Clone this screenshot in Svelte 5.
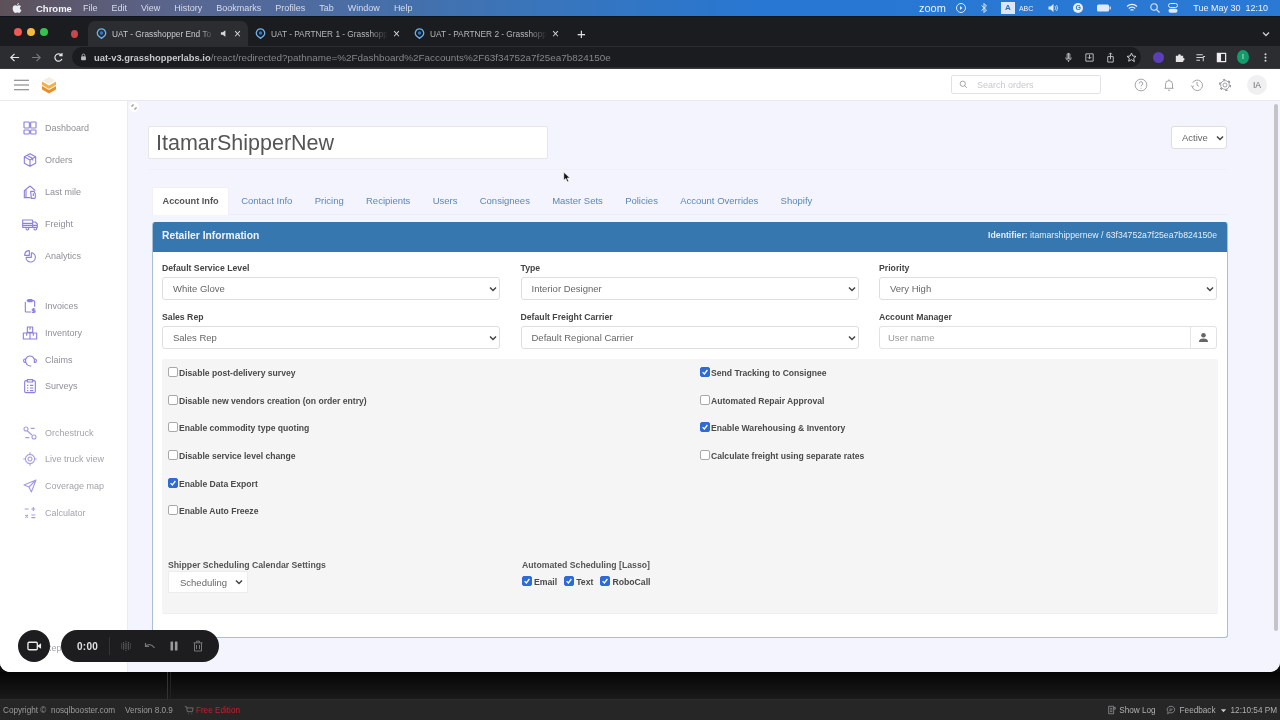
<script>
  const menus = ['File','Edit','View','History','Bookmarks','Profiles','Tab','Window','Help'];
  const tabs = [
    { t: 'UAT - Grasshopper End To', active: true },
    { t: 'UAT - PARTNER 1 - Grasshopp' },
    { t: 'UAT - PARTNER 2 - Grasshopp' }
  ];
  const navIcons = {
    dash: 'M3 3h7a1 1 0 0 1 1 1v7a1 1 0 0 1-1 1H4a1 1 0 0 1-1-1zM14 3h6a1 1 0 0 1 1 1v7a1 1 0 0 1-1 1h-6a1 1 0 0 1-1-1V4a1 1 0 0 1 1-1zM4 15h6a1 1 0 0 1 1 1v4a1 1 0 0 1-1 1H4a1 1 0 0 1-1-1v-4a1 1 0 0 1 1-1zM14 15h6a1 1 0 0 1 1 1v4a1 1 0 0 1-1 1h-6a1 1 0 0 1-1-1v-4a1 1 0 0 1 1-1z',
    box: 'M12 2.5l8.5 4.8v9.4L12 21.5l-8.5-4.8V7.3zM3.5 7.3L12 12l8.5-4.7M12 12v9.5M7.5 5l8.5 4.8v3',
    home: 'M12 3L3.5 10v10.5h9M12 3l8 7M6 8.5V21M13 11h5l2 4v5a1.5 1.5 0 0 1-1.5 1.5H14zM17 14v4',
    truck: 'M1 6h14a1 1 0 0 1 1 1v10H1zM16 9h4l3 3v5h-7zM1 11h15M1 14h22M6 19a2 2 0 1 0 0-.1M18 19a2 2 0 1 0 0-.1',
    pie: 'M10 4a7 7 0 0 0-6 7h7V4zM14 7a7 7 0 1 1-8 7M14 7v7H6',
    inv: 'M7 4h10a2 2 0 0 1 2 2v7M5 6v14a1 1 0 0 0 1 1h8M9 2.5h6v3H9zM17.5 15v7M20 16.5h-3.5a1.2 1.2 0 0 0 0 2.5h2a1.2 1.2 0 0 1 0 2.5H15',
    stock: 'M8 3h8v8H8zM2 12h10v9H2zM12 12h10v9H12zM12 3v4M7 12v4M17 12v4',
    claim: 'M6 10a6.5 6.5 0 0 1 12 0M4.5 10.5a2 2 0 0 0-2 2v1a2 2 0 0 0 2 2h1v-5zM19.5 10.5a2 2 0 0 1 2 2v1a2 2 0 0 1-2 2h-1v-5zM6 16a7 7 0 0 0 6 5h2',
    survey: 'M8 4H6a2 2 0 0 0-2 2v14a2 2 0 0 0 2 2h12a2 2 0 0 0 2-2V6a2 2 0 0 0-2-2h-2M8 2.5h8v3.500H8zM7.500 11h2M12 11h5M7.500 15h2M12 15h5M7.500 19h2M12 19h5',
    orch: 'M3 6a3 3 0 1 0 6 0a3 3 0 1 0-6 0M15 18a3 3 0 1 0 6 0a3 3 0 1 0-6 0M8 9l7 6M13 5h6M5 19h6',
    live: 'M12 5a7 7 0 1 0 .01 0zM12 9a3 3 0 1 0 .01 0zM12 2v3M12 19v3M2 12h3M19 12h3',
    plane: 'M21 3L3 10.500l7.500 3L14 21zM10.500 13.500L21 3',
    calc: 'M4 6h6M14 6h6M17 3v6M5 15l4 4M9 15l-4 4M14 15h6M14 19h6',
    rep: 'M4 20V10M10 20V4M16 20v-7'
  };
  const groups = [
    { cls: 'g1', items: [['Dashboard','dash'],['Orders','box'],['Last mile','home'],['Freight','truck'],['Analytics','pie']] },
    { cls: 'g2', items: [['Invoices','inv'],['Inventory','stock'],['Claims','claim'],['Surveys','survey']] },
    { cls: 'g3', items: [['Orchestruck','orch'],['Live truck view','live'],['Coverage map','plane'],['Calculator','calc']] }
  ];
  const pageTabs = ['Account Info','Contact Info','Pricing','Recipients','Users','Consignees','Master Sets','Policies','Account Overrides','Shopify'];
  const leftChecks = [
    ['Disable post-delivery survey', false],
    ['Disable new vendors creation (on order entry)', false],
    ['Enable commodity type quoting', false],
    ['Disable service level change', false],
    ['Enable Data Export', true],
    ['Enable Auto Freeze', false]
  ];
  const rightChecks = [
    ['Send Tracking to Consignee', true],
    ['Automated Repair Approval', false],
    ['Enable Warehousing & Inventory', true],
    ['Calculate freight using separate rates', false]
  ];
</script>

{#snippet chevron()}
  <svg class="chev" viewBox="0 0 10 10" aria-hidden="true"><path d="M2 3.500L5 6.500L8 3.500" fill="none" stroke="#444" stroke-width="1.500"/></svg>
{/snippet}

{#snippet selectBox(value, cls)}
  <div class="select {cls}">
    <span>{value}</span>
    {@render chevron()}
  </div>
{/snippet}

{#snippet check(on)}
  <span class="cb" class:on>
    {#if on}
      <svg viewBox="0 0 10 10" aria-hidden="true"><path d="M2 5.200L4.200 7.500L8 2.500" fill="none" stroke="#fff" stroke-width="1.600"/></svg>
    {/if}
  </span>
{/snippet}

{#snippet favicon()}
  <svg class="fav" viewBox="0 0 12 12" aria-hidden="true"><path d="M6 1a4.500 4.500 0 0 1 3.200 7.700L6 11.300L2.800 8.700A4.500 4.500 0 0 1 6 1z" fill="none" stroke="#6fb3e8" stroke-width="1.400"/><circle cx="6" cy="5.500" r="1.900" fill="#2f76c9"/></svg>
{/snippet}

<div class="screen">
  <header class="menubar">
    <svg class="apple" viewBox="0 0 12 14" aria-hidden="true"><path d="M8.300 1c.1 1-.9 2.400-2.200 2.300C6 2.200 7.100 1.100 8.300 1zM6.100 4.200c.6 0 1.300-.6 2.400-.6c.9 0 1.800.5 2.300 1.200c-2 1.200-1.600 3.900.5 4.700c-.5 1.400-1.700 3.500-2.900 3.500c-.8 0-1.100-.5-2.100-.5s-1.400.5-2.100.5C2.500 12.800.8 10 .8 7.500c0-2.400 1.500-3.800 3-3.800c.9 0 1.700.5 2.300.5z" fill="#e9edf4"/></svg>
    <strong class="app-name">Chrome</strong>
    <nav class="menus">
      {#each menus as m}<span>{m}</span>{/each}
    </nav>
    <div class="status-items">
      <span class="zoom">zoom</span>
      <svg class="tray s12 play" viewBox="0 0 12 12" aria-hidden="true"><circle cx="6" cy="6" r="4.500" fill="none" stroke="#dfe9f7"/><path d="M5 4l2.500 2L5 8z" fill="#dfe9f7"/></svg>
      <svg class="tray s12" viewBox="0 0 12 12" aria-hidden="true"><path d="M3.500 3.500L8.500 8L6 10.500V1.500L8.500 4L3.500 8.500" fill="none" stroke="#dfe9f7"/></svg>
      <span class="kbd">A</span>
      <span class="abc">ABC</span>
      <svg class="tray s12 sp3" viewBox="0 0 12 12" aria-hidden="true"><path d="M1.500 4.500h2L6.500 2v8l-3-2.500h-2z" fill="#dfe9f7"/><path d="M8 4a3 3 0 0 1 0 4M9.500 3a5 5 0 0 1 0 6" fill="none" stroke="#dfe9f7" stroke-width=".8"/></svg>
      <span class="g-circle sp3">G</span>
      <svg class="tray s16 sp2" viewBox="0 0 16 10" aria-hidden="true"><rect x="1" y="1.500" width="12" height="7" rx="1.500" fill="#dfe9f7"/><rect x="13.500" y="3.500" width="1.300" height="3" fill="#dfe9f7"/></svg>
      <svg class="tray s12 sp3" viewBox="0 0 12 12" aria-hidden="true"><path d="M1 4.500a7 7 0 0 1 10 0M2.800 6.500a4.500 4.500 0 0 1 6.400 0M4.500 8.300a2.200 2.200 0 0 1 3 0" fill="none" stroke="#e9f0fa" stroke-width="1.100"/></svg>
      <svg class="tray s12" viewBox="0 0 12 12" aria-hidden="true"><circle cx="5" cy="5" r="3.200" fill="none" stroke="#dfe9f7" stroke-width="1.100"/><path d="M7.500 7.500L10.500 10.500" stroke="#dfe9f7" stroke-width="1.100"/></svg>
      <svg class="tray s12 ctl" viewBox="0 0 12 12" aria-hidden="true"><rect x="1.500" y="1.500" width="9" height="4" rx="2" fill="none" stroke="#dfe9f7"/><rect x="1.500" y="6.800" width="9" height="4" rx="2" fill="#dfe9f7"/></svg>
      <span class="clock">Tue May 30&nbsp;&nbsp;12:10</span>
    </div>
  </header>

  <div class="tabstrip">
    <div class="lights"><i class="red"></i><i class="yellow"></i><i class="green"></i></div>
    <i class="rec-dot"></i>
    {#each tabs as tab}
      <div class="tab" class:active={tab.active}>
        {@render favicon()}
        <span class="tab-title">{tab.t}</span>
        {#if tab.active}
          <svg class="tab-sound" viewBox="0 0 10 10" aria-hidden="true"><path d="M1 3.500h2L6 1.500v7L3 6.500H1z" fill="#d8d8da"/></svg>
        {/if}
        <span class="tab-x">×</span>
      </div>
    {/each}
    <span class="tab-plus">+</span>
    <svg class="tab-more" viewBox="0 0 10 10" aria-hidden="true"><path d="M2 3.500L5 6.500L8 3.500" fill="none" stroke="#c8c8ca" stroke-width="1.400"/></svg>
  </div>

  <div class="toolbar">
    <svg class="nav-ico" viewBox="0 0 12 12" aria-hidden="true"><path d="M11 6H2M6 2L2 6l4 4" fill="none" stroke="#e6e6e8" stroke-width="1.300"/></svg>
    <svg class="nav-ico" viewBox="0 0 12 12" aria-hidden="true"><path d="M1 6h9M6 2l4 4l-4 4" fill="none" stroke="#76777b" stroke-width="1.300"/></svg>
    <svg class="nav-ico" viewBox="0 0 12 12" aria-hidden="true"><path d="M9.800 7.500A4 4 0 1 1 9 3.300M9.800 1v3H6.800" fill="none" stroke="#e6e6e8" stroke-width="1.300"/></svg>
    <div class="omnibox">
      <svg class="lock" viewBox="0 0 8 10" aria-hidden="true"><rect x="1" y="4" width="6" height="5" rx="1" fill="#bcbcc0"/><path d="M2.300 4V3a1.700 1.700 0 0 1 3.400 0v1" fill="none" stroke="#bcbcc0"/></svg>
      <span class="url"><b>uat-v3.grasshopperlabs.io</b>/react/redirected?pathname=%2Fdashboard%2Faccounts%2F63f34752a7f25ea7b824150e</span>
      <div class="omni-icons">
        <svg viewBox="0 0 12 12" aria-hidden="true"><path d="M6 1v6M4.500 2h3v5h-3zM3 6a3 3 0 0 0 6 0M6 9v2" fill="none" stroke="#b9babd"/></svg>
        <svg viewBox="0 0 12 12" aria-hidden="true"><path d="M2 2h8v8H2zM6 3v4M4 5.500L6 7.500l2-2" fill="none" stroke="#c2c3c6"/></svg>
        <svg viewBox="0 0 12 12" aria-hidden="true"><path d="M3 5h6v6H3zM6 8V1M4.300 2.700L6 1l1.700 1.700" fill="none" stroke="#c2c3c6"/></svg>
        <svg viewBox="0 0 12 12" aria-hidden="true"><path d="M6 1.200l1.500 3.200l3.400.4l-2.500 2.300l.7 3.400L6 8.400l-3.100 1.700l.7-3.400L1.100 4.800l3.400-.4z" fill="none" stroke="#d4d5d8"/></svg>
      </div>
    </div>
    <div class="ext-icons">
      <i class="ext-purple"></i>
      <svg viewBox="0 0 12 12" aria-hidden="true"><path d="M2 4h2.500a1.500 1.500 0 1 1 3 0H10v2.500a1.500 1.500 0 1 1 0 3V11H2z" fill="#e4e4e6"/></svg>
      <svg viewBox="0 0 12 12" aria-hidden="true"><path d="M1.500 3h7M1.500 6h7M1.500 9h4M9 5v5M9 5h2" fill="none" stroke="#d6d6d8" stroke-width="1.100"/></svg>
      <svg viewBox="0 0 12 12" aria-hidden="true"><rect x="1.500" y="1.500" width="9" height="9" fill="none" stroke="#f0f0f2" stroke-width="1.300"/><rect x="1.500" y="1.500" width="4" height="9" fill="#f0f0f2"/></svg>
      <span class="profile">I</span>
      <svg viewBox="0 0 12 12" aria-hidden="true"><circle cx="6" cy="2.500" r="1.100" fill="#d8d8da"/><circle cx="6" cy="6" r="1.100" fill="#d8d8da"/><circle cx="6" cy="9.500" r="1.100" fill="#d8d8da"/></svg>
    </div>
  </div>

  <div class="window">
    <div class="topbar">
      <svg class="burger" viewBox="0 0 16 12" aria-hidden="true"><path d="M0 1h16M0 6h16M0 11h16" stroke="#77777c" stroke-width="1.100"/></svg>
      <svg class="logo" viewBox="0 0 16 18" aria-hidden="true"><path d="M8 1l6 3.500L8 8L2 4.500z" fill="#f3eee2"/><path d="M1 5.500L8 9.500l7-4v3.500L8 13L1 9z" fill="#f2b04a"/><path d="M1 10L8 14l7-4v3.500L8 17.500L1 13.500z" fill="#e8902c"/></svg>
      <div class="search">
        <svg viewBox="0 0 12 12" aria-hidden="true"><circle cx="5" cy="5" r="3.500" fill="none" stroke="#8b8b90"/><path d="M7.600 7.600L10.500 10.500" stroke="#8b8b90"/></svg>
        <span>Search orders</span>
      </div>
      <div class="top-icons">
        <svg viewBox="0 0 16 16" aria-hidden="true"><circle cx="8" cy="8" r="6.700" fill="none" stroke="#8e8e93" stroke-width=".9"/><path d="M6 6.300a2 2 0 1 1 3 1.700c-.7.400-1 .8-1 1.600M8 11.300v.8" fill="none" stroke="#8e8e93"/></svg>
        <svg viewBox="0 0 16 16" aria-hidden="true"><path d="M4 11.500V7a4 4 0 0 1 8 0v4.500M2.800 11.800h10.400M6.800 14h2.400M8 1.500V3" fill="none" stroke="#8e8e93" stroke-width=".9"/></svg>
        <svg viewBox="0 0 16 16" aria-hidden="true"><path d="M3 5.500A6 6 0 1 1 2.500 10M1.500 8.500l1.200 1.700l1.800-1.300M8 4.500V8l2.300 1.500" fill="none" stroke="#8e8e93" stroke-width=".9"/></svg>
        <svg viewBox="0 0 16 16" aria-hidden="true"><circle cx="8" cy="8" r="2.300" fill="none" stroke="#8e8e93" stroke-width=".9"/><circle cx="8" cy="8" r="5" fill="none" stroke="#8e8e93" stroke-width=".9"/><circle cx="8" cy="8" r="6.200" fill="none" stroke="#8e8e93" stroke-width="1.500" stroke-dasharray="2.600 3.900"/></svg>
      </div>
      <span class="avatar">IA</span>
    </div>

    <div class="body">
      <aside class="sidebar">
        {#each groups as g}
          <ul class={g.cls}>
            {#each g.items as [label, icon]}
              <li>
                <svg viewBox="0 0 24 24" aria-hidden="true"><path d={navIcons[icon]} fill="none" stroke="currentColor" stroke-width="1.700" stroke-linejoin="round"/></svg>
                <span>{label}</span>
              </li>
            {/each}
          </ul>
        {/each}
        <ul class="g3 g-last"><li><svg viewBox="0 0 24 24" aria-hidden="true"><path d={navIcons.rep} fill="none" stroke="currentColor" stroke-width="1.500"/></svg><span>Reports</span></li></ul>
      </aside>

      <main class="content">
        <div class="title-row">
          <input class="title" value="ItamarShipperNew" aria-label="Account name" />
          {@render selectBox('Active', 'status')}
        </div>

        <div class="page-tabs">
          {#each pageTabs as t, i}
            <span class="page-tab" class:current={i === 0}>{t}</span>
          {/each}
        </div>

        <section class="panel">
          <div class="panel-head">
            <strong>Retailer Information</strong>
            <span class="ident"><b>Identifier:</b> itamarshippernew / 63f34752a7f25ea7b824150e</span>
          </div>
          <div class="panel-body">
            <div class="fields">
              <div class="field"><label>Default Service Level</label>{@render selectBox('White Glove', '')}</div>
              <div class="field"><label>Type</label>{@render selectBox('Interior Designer', '')}</div>
              <div class="field"><label>Priority</label>{@render selectBox('Very High', '')}</div>
              <div class="field"><label>Sales Rep</label>{@render selectBox('Sales Rep', '')}</div>
              <div class="field"><label>Default Freight Carrier</label>{@render selectBox('Default Regional Carrier', '')}</div>
              <div class="field">
                <label>Account Manager</label>
                <div class="user-input">
                  <span>User name</span>
                  <div class="addon"><svg viewBox="0 0 12 12" aria-hidden="true"><circle cx="6" cy="3.500" r="2.500" fill="#666"/><path d="M1 11c0-3 2-4 5-4s5 1 5 4z" fill="#666"/></svg></div>
                </div>
              </div>
            </div>

            <div class="well">
              <div class="check-cols">
                <div class="check-col left">
                  {#each leftChecks as [text, on]}
                    <div class="check-row">{@render check(on)}<span>{text}</span></div>
                  {/each}
                </div>
                <div class="check-col">
                  {#each rightChecks as [text, on]}
                    <div class="check-row">{@render check(on)}<span>{text}</span></div>
                  {/each}
                </div>
              </div>
              <div class="sched">
                <div class="sched-a">
                  <div class="well-label">Shipper Scheduling Calendar Settings</div>
                  {@render selectBox('Scheduling', 'small')}
                </div>
                <div class="sched-b">
                  <div class="well-label">Automated Scheduling [Lasso]</div>
                  <div class="inline-checks">
                    <span>{@render check(true)}<em>Email</em></span>
                    <span>{@render check(true)}<em>Text</em></span>
                    <span>{@render check(true)}<em>RoboCall</em></span>
                  </div>
                </div>
              </div>
            </div>
          </div>
        </section>
      </main>
      <div class="scrollbar"><i></i></div>
    </div>
  </div>

  <div class="desk"><div class="pane p1"></div><div class="pane p2"></div></div>

  <footer class="statusbar">
    <span>Copyright ©&nbsp; nosqlbooster.com</span>
    <span class="ver">Version 8.0.9</span>
    <svg class="cart" viewBox="0 0 12 12" aria-hidden="true"><path d="M1 2h2l1 6h6l1-4.500H3.500M5 10.500h.8M9 10.500h.8" fill="none" stroke="#77787a"/></svg>
    <span class="free">Free Edition</span>
    <span class="right-status">
      <svg viewBox="0 0 12 12" aria-hidden="true"><path d="M2 1.500h6v9H2zM3.500 4h3M3.500 6h3M3.500 8h3M8 3h2v2H8" fill="none" stroke="#a8a8aa" stroke-width=".8"/></svg>
      <span>Show Log</span>
      <svg class="fb" viewBox="0 0 12 12" aria-hidden="true"><path d="M6 1.500a4.500 4 0 1 1-2 7.600L2 10.500l.4-2.400A4.500 4 0 0 1 6 1.500zM4 5h4M4 6.800h2.500" fill="none" stroke="#a8a8aa" stroke-width=".8"/></svg>
      <span>Feedback</span>
      <svg class="caret" viewBox="0 0 8 8" aria-hidden="true"><path d="M1 2.500h6L4 6z" fill="#c8c8ca"/></svg>
      <span>12:10:54 PM</span>
    </span>
  </footer>

  <svg class="cursor" viewBox="0 0 10 14" aria-hidden="true"><path d="M1 1v10l2.500-2.200L5.300 13l1.700-.8L5.200 8.200H8.500z" fill="#111" stroke="#fff" stroke-width=".7"/></svg>
  <svg class="expand" viewBox="0 0 10 10" aria-hidden="true"><path d="M3 3h2M3 3v2M7 7H5M7 7V5" fill="none" stroke="#777" stroke-width=".8"/></svg>

  <div class="rec-btn">
    <svg viewBox="0 0 16 12" aria-hidden="true"><rect x="1" y="2" width="10" height="8" rx="1.300" fill="none" stroke="#eee" stroke-width="1.400"/><path d="M11.500 5.500L15 3v6l-3.500-2.500z" fill="#eee"/></svg>
  </div>
  <div class="rec-pill">
    <span class="time">0:00</span>
    <i class="sep"></i>
    <svg viewBox="0 0 12 12" aria-hidden="true"><path d="M6 1v10M3.500 2v8M8.500 2v8M1 4h10M1 6h10M1 8h10" stroke="#6f6f72" stroke-width=".8" stroke-dasharray="1 .8"/></svg>
    <svg viewBox="0 0 12 12" aria-hidden="true"><path d="M1.500 3v3.500H5M1.800 6.200C4 4 8 4 10.500 8" fill="none" stroke="#77777a" stroke-width="1.200"/></svg>
    <svg viewBox="0 0 12 12" aria-hidden="true"><rect x="2.500" y="1.500" width="2.600" height="9" rx=".6" fill="#9a9a9d"/><rect x="6.900" y="1.500" width="2.600" height="9" rx=".6" fill="#9a9a9d"/></svg>
    <svg viewBox="0 0 12 12" aria-hidden="true"><path d="M1.500 2.800h9M4.500 2.500V1.200h3v1.300M2.500 3v8h7V3M4.500 5v4M7.500 5v4" fill="none" stroke="#77777a"/></svg>
  </div>
</div>

<style>
  :global(body) { margin: 0; background: #111; }
  .screen {
    position: relative;
    width: 1280px;
    height: 720px;
    overflow: hidden;
    display: flex;
    flex-direction: column;
    background: #0d0d0e;
    font-family: "Liberation Sans", Arial, sans-serif;
    filter: blur(0.45px);
  }
  .menubar {
    height: 16px;
    flex: none;
    display: flex;
    align-items: center;
    padding-left: 12px;
    color: #e4e9f2;
    font-size: 9px;
    background: linear-gradient(90deg, #5d5058 0%, #5a6690 14%, #3b74b8 40%, #2777d3 60%, #2a79d4 100%);
    border-bottom: 1px solid #10141c;
  }
  .apple { width: 10px; height: 12px; margin-right: 14px; }
  .app-name { font-size: 9.500px; color: #f4f6fa; }
  .menus { display: flex; gap: 14px; margin-left: 11px; color: #d7dce8; }
  .status-items { margin-left: auto; display: flex; align-items: center; gap: 11px; padding-right: 12px; color: #eef3fb; }
  .zoom { font-size: 11px; }
  .tray { display: block; height: 12px; }
  .s12 { width: 12px; }
  .s16 { width: 16px; }
  .play { margin-left: -2px; }
  .sp3 { margin-left: 3px; }
  .sp2 { margin-left: 2px; }
  .ctl { margin-left: -5px; }
  .kbd { width: 14px; height: 12px; background: #dce6f4; color: #2f6fbf; font-size: 8px; font-weight: 700; text-align: center; line-height: 12px; }
  .abc { font-size: 7px; margin-left: -7px; }
  .g-circle { width: 10px; height: 10px; border-radius: 50%; background: #e6eef9; color: #2a79d4; font-size: 7px; font-weight: 700; text-align: center; line-height: 10px; }
  .clock { font-size: 9px; margin-left: 3px; }

  .tabstrip {
    height: 29px;
    flex: none;
    display: flex;
    align-items: flex-end;
    background: #1b1c1f;
    position: relative;
    padding-left: 88px;
  }
  .lights { position: absolute; left: 14px; top: 11px; display: flex; gap: 5px; }
  .lights i { width: 8px; height: 8px; border-radius: 50%; }
  .red { background: #ee5a55; }
  .yellow { background: #f4b93f; }
  .green { background: #35c24d; }
  .rec-dot { position: absolute; left: 71px; top: 13px; width: 7px; height: 8px; border-radius: 50%; background: #c8474c; }
  .tab {
    width: 148px;
    height: 25px;
    margin-right: 11px;
    box-sizing: border-box;
    display: flex;
    align-items: center;
    padding-left: 1px;
    padding-right: 2px;
    font-size: 8.300px;
    color: #b5b6ba;
    border-radius: 7px 7px 0 0;
    gap: 5px;
  }
  .tab.active { width: 160px; margin-right: 6px; padding-left: 8px; padding-right: 7px; background: #2c2d31; color: #c9cacd; }
  .fav { width: 11px; height: 11px; flex: none; }
  .tab-title { flex: 1; white-space: nowrap; -webkit-mask-image: linear-gradient(90deg, #000 85%, transparent); mask-image: linear-gradient(90deg, #000 85%, transparent); }
  .tab-sound { width: 9px; height: 9px; }
  .tab-x { color: #d8d8da; font-size: 12px; line-height: 1; }
  .tab-plus { align-self: center; color: #e0e0e2; font-size: 15px; margin-left: 5px; margin-top: 4px; line-height: 1; }
  .tab-more { position: absolute; right: 9px; top: 12px; width: 10px; height: 10px; }

  .toolbar {
    height: 23px;
    flex: none;
    display: flex;
    align-items: center;
    background: #2c2d31;
    padding-left: 9px;
    gap: 11px;
    border-bottom: 1px solid #3a3b3f;
    box-sizing: border-box;
  }
  .nav-ico { width: 11px; height: 11px; flex: none; }
  .omnibox {
    width: 1069px;
    margin-left: -3px;
    height: 20px;
    border-radius: 10px;
    background: #1b1c1f;
    display: flex;
    align-items: center;
    padding: 0 4px 0 8px;
    box-sizing: border-box;
    flex: none;
  }
  .lock { width: 7px; height: 8px; margin-right: 7px; flex: none; }
  .url { font-size: 9.900px; color: #85868a; white-space: nowrap; }
  .url b { font-size: 9.400px; color: #c8c9cc; font-weight: 700; }
  .omni-icons { margin-left: auto; display: flex; gap: 10px; }
  .omni-icons svg { width: 11px; height: 11px; }
  .ext-icons { display: flex; align-items: center; gap: 10px; margin-left: 1px; }
  .ext-icons svg { width: 11px; height: 11px; }
  .ext-purple { width: 11px; height: 11px; border-radius: 50%; background: #5b3fb8; }
  .profile { width: 12px; height: 14px; border-radius: 50%; background: #129c6c; color: #d5f3e6; font-size: 7px; text-align: center; line-height: 14px; margin-right: 1px; }

  .window {
    flex: none;
    height: 603px;
    background: #fff;
    border-radius: 0 0 10px 10px;
    overflow: hidden;
    display: flex;
    flex-direction: column;
  }
  .topbar {
    height: 32px;
    flex: none;
    box-sizing: border-box;
    display: flex;
    align-items: center;
    padding: 0 13px 0 14px;
    border-bottom: 1px solid #e8e8ee;
  }
  .burger { width: 15px; height: 12px; }
  .logo { width: 16px; height: 18px; margin-left: 12px; }
  .search {
    margin-left: auto;
    width: 150px;
    height: 19px;
    box-sizing: border-box;
    border: 1px solid #e2e2e6;
    border-radius: 2px;
    display: flex;
    align-items: center;
    padding-left: 7px;
    gap: 9px;
    font-size: 9px;
    color: #c9c9cd;
  }
  .search svg { width: 9px; height: 9px; }
  .top-icons { display: flex; gap: 14px; margin-left: 33px; }
  .top-icons svg { width: 14px; height: 14px; }
  .avatar {
    margin-left: 15px;
    width: 20px;
    height: 20px;
    border-radius: 50%;
    background: #f0f0f2;
    color: #6c6c70;
    font-size: 8.500px;
    text-align: center;
    line-height: 20px;
  }

  .body { flex: 1; min-height: 0; display: flex; position: relative; background: #f3f4fd; }
  .sidebar {
    width: 128px;
    flex: none;
    box-sizing: border-box;
    background: #fff;
    border-right: 1px solid #e9eaf3;
    padding: 11px 0;
    display: flex;
    flex-direction: column;
  }
  ul { list-style: none; margin: 0; padding: 0; }
  li { display: flex; align-items: center; padding-left: 22px; gap: 7px; font-size: 9px; color: #8f8f97; }
  li svg { width: 16px; height: 16px; color: #8c80e0; flex: none; }
  .g1 li { height: 32px; }
  .g2 { margin-top: 21px; }
  .g2 li, .g3 li { height: 26.700px; }
  .g3 { margin-top: 19.500px; }
  .g3 li { color: #a3a3ab; }
  .g3 li svg { color: #a59ce6; }
  .g-last { margin-top: auto; }

  .content { flex: 1; min-width: 0; padding: 25px 52px 0 24px; }
  .title-row {
    display: flex;
    justify-content: space-between;
    align-items: flex-start;
    margin-left: -4px;
    margin-right: 1px;
    padding-bottom: 10px;
    border-bottom: 1px solid #eeeff9;
    margin-bottom: 17px;
  }
  .title {
    width: 400px;
    height: 33px;
    box-sizing: border-box;
    border: 1px solid #e6e6e8;
    border-radius: 2px;
    background: #fff;
    padding: 2px 7px 0;
    font: 21.500px "Liberation Sans", Arial, sans-serif;
    color: #555;
    outline: none;
  }
  .select {
    height: 23px;
    box-sizing: border-box;
    background: #fff;
    border: 1px solid #dedede;
    border-radius: 3px;
    font-size: 9.500px;
    color: #666;
    display: flex;
    align-items: center;
    justify-content: space-between;
    padding: 0 1px 0 10px;
  }
  .chev { width: 10px; height: 10px; }
  .status { width: 56px; }
  .page-tabs {
    display: flex;
    height: 28px;
    border-bottom: 1px solid #ecedf8;
    box-sizing: border-box;
    margin-bottom: 7px;
  }
  .page-tab {
    padding: 0 11.150px;
    font-size: 9.500px;
    color: #5b87b8;
    line-height: 27px;
  }
  .page-tab.current {
    background: #fff;
    color: #555;
    font-weight: 700;
    font-size: 9.200px;
    width: 77px;
    padding: 0 0 0 9.500px;
    margin-right: 1px;
    border: 1px solid #f0f0f6;
    border-bottom: 0;
    border-radius: 2px 2px 0 0;
    height: 28px;
    box-sizing: border-box;
  }
  .panel {
    background: #fff;
    border: 1px solid #a9bfd6;
    border-top: 0;
    border-radius: 3px;
    overflow: hidden;
    height: 416px;
    box-sizing: border-box;
  }
  .panel-head {
    height: 30px;
    box-sizing: border-box;
    margin: 0 -1px;
    background: #3677b0;
    color: #fff;
    display: flex;
    align-items: center;
    justify-content: space-between;
    padding: 0 11px 4px 10px;
  }
  .panel-head strong { font-size: 10.300px; color: #eef4fa; }
  .ident { font-size: 8.700px; color: #e3edf6; }
  .panel-body { padding: 10px 9px 0 9px; }
  .fields { display: grid; grid-template-columns: 338px 338px 338px; column-gap: 20.500px; row-gap: 11px; }
  label { display: block; font-size: 8.700px; line-height: 12px; font-weight: 700; color: #444; margin-bottom: 3px; }
  .user-input {
    height: 23px;
    box-sizing: border-box;
    border: 1px solid #e2e2e2;
    border-radius: 3px;
    display: flex;
    align-items: center;
    padding-left: 8px;
    font-size: 9.500px;
    color: #9a9a9a;
    justify-content: space-between;
  }
  .addon { width: 25px; height: 100%; border-left: 1px solid #e6e6e6; display: flex; align-items: center; justify-content: center; }
  .addon svg { width: 11px; height: 11px; }
  .well {
    margin-top: 10px;
    height: 255px;
    box-sizing: border-box;
    background: #f5f5f5;
    border-radius: 2px;
    padding-left: 6px;
    border: 0 solid #eee;
    border-bottom-width: 1px;
  }
  .check-cols { display: flex; }
  .check-col.left { width: 532px; flex: none; }
  .check-row { height: 27.700px; display: flex; align-items: center; font-size: 8.600px; font-weight: 700; color: #4a4a4a; gap: 1px; }
  .cb {
    width: 10px;
    height: 10px;
    box-sizing: border-box;
    background: #fff;
    border: 1px solid #a9a9a9;
    border-radius: 2px;
    flex: none;
    display: block;
    margin-top: -2px;
  }
  .cb.on { background: #2f6bd6; border-color: #2f6bd6; }
  .cb svg { display: block; width: 8px; height: 8px; }
  .sched { display: flex; margin-top: 34px; }
  .sched-a { width: 354px; flex: none; }
  .well-label { font-size: 8.700px; line-height: 12px; font-weight: 700; color: #555; }
  .small { width: 80px; height: 22px; border-color: #ececec; padding-left: 11px; padding-right: 3px; border-radius: 1px; }
  .inline-checks { display: flex; gap: 7px; margin-top: 5px; height: 12px; }
  .inline-checks span { display: flex; align-items: center; gap: 2px; }
  .inline-checks em { font-style: normal; font-size: 8.700px; font-weight: 700; color: #4a4a4a; }
  .scrollbar { position: absolute; right: 0; top: 0; bottom: 0; width: 8px; }
  .scrollbar i { display: block; margin: 3px 2px 0 2px; width: 4px; height: 527px; border-radius: 2px; background: #c4c4c8; }

  .desk {
    height: 28px;
    flex: none;
    display: flex;
    gap: 2px;
    background: linear-gradient(#050505, #1a1a1b);
    border-bottom: 1px solid #2c2c2e;
    box-sizing: border-box;
  }
  .p1 { width: 167px; border-right: 1px solid #333; }
  .p2 { flex: 1; border-left: 1px solid #222; }
  .statusbar {
    height: 20px;
    flex: none;
    display: flex;
    align-items: center;
    padding: 0 3px;
    background: #262627;
    color: #9b9b9d;
    font-size: 8.200px;
  }
  .ver { margin-left: 10px; }
  .cart { width: 10px; height: 10px; margin-left: 11px; }
  .free { color: #c6202a; margin-left: 2px; filter: blur(.5px); }
  .right-status { margin-left: auto; display: flex; align-items: center; gap: 2px; color: #b0b0b2; }
  .right-status svg { width: 10px; height: 10px; }
  .right-status .fb { margin-left: 8px; margin-right: 2px; }
  .right-status .caret { width: 7px; height: 7px; margin: 0 2px 0 2px; }
  .cursor { position: absolute; left: 563px; top: 171px; width: 8px; height: 12px; }
  .expand { position: absolute; left: 129px; top: 102px; width: 10px; height: 10px; background: #fff; border-radius: 50%; }
  .rec-btn {
    position: absolute;
    left: 18px;
    top: 630px;
    width: 32px;
    height: 32px;
    border-radius: 50%;
    background: #1d1d1f;
    display: flex;
    align-items: center;
    justify-content: center;
  }
  .rec-btn svg { width: 15px; height: 12px; }
  .rec-pill {
    position: absolute;
    left: 61px;
    top: 630px;
    width: 158px;
    height: 32px;
    border-radius: 16px;
    background: #1d1d1f;
    box-sizing: border-box;
    display: flex;
    align-items: center;
    padding-left: 16px;
    color: #e0e0e2;
  }
  .rec-pill svg { width: 12px; height: 12px; margin-left: 12px; }
  .rec-pill .sep + svg { margin-left: 10px; }
  .time { font-size: 10px; font-weight: 700; width: 22px; letter-spacing: .3px; }
  .sep { width: 1px; height: 18px; background: #333; margin-left: 10px; margin-right: 0; }
</style>
